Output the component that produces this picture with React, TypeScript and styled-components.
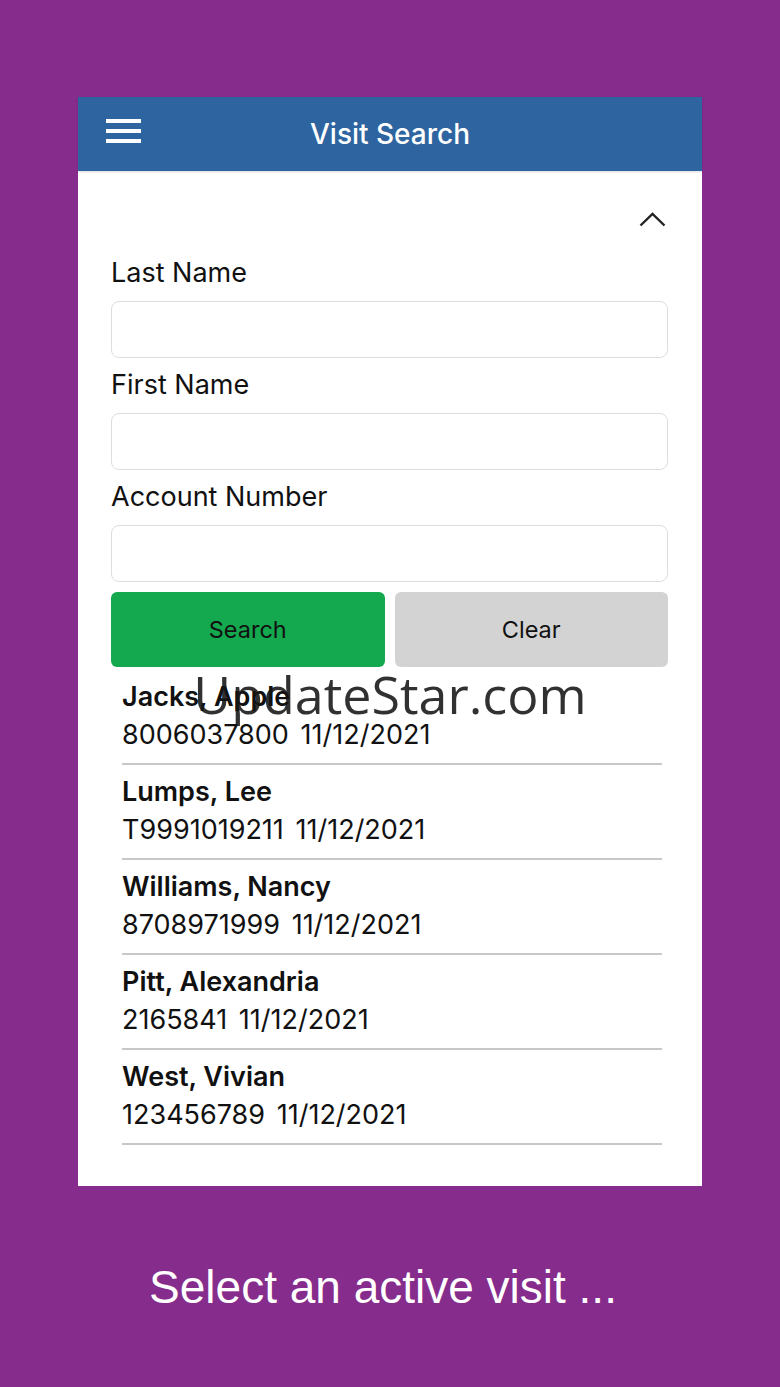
import React from "react";
import styled, { createGlobalStyle } from "styled-components";

const GlobalStyle = createGlobalStyle`
  html, body {
    margin: 0;
    padding: 0;
    background: #862c8c;
  }
  body {
    font-family: Inter, Roboto, "Liberation Sans", Arial, sans-serif;
  }
`;

const Screen = styled.div`
  width: 780px;
  height: 1387px;
  background: #862c8c;
  display: flex;
  flex-direction: column;
  align-items: center;
  padding-top: 97px;
  box-sizing: border-box;
  position: relative;
`;

const Phone = styled.div`
  width: 624px;
  height: 1089px;
  background: #fff;
  display: flex;
  flex-direction: column;
`;

const Header = styled.header`
  height: 74px;
  background: #2e65a0;
  display: flex;
  align-items: center;
  position: relative;
  padding-left: 28px;
  box-shadow: 0 1px 2px rgba(0, 0, 0, 0.15);
`;

const Hamburger = styled.div`
  width: 35px;
  display: flex;
  flex-direction: column;
  gap: 6px;
  margin-top: -6px;

  span {
    display: block;
    height: 4px;
    background: #fff;
  }
`;

const Title = styled.h1`
  position: absolute;
  left: 0;
  right: 0;
  margin: 0;
  text-align: center;
  color: #fff;
  font-size: 28px;
  font-weight: 500;
  pointer-events: none;
`;

const Form = styled.div`
  padding: 34px 34px 40px 33px;
  display: flex;
  flex-direction: column;
`;

const CollapseRow = styled.div`
  height: 28px;
  display: flex;
  justify-content: flex-end;
  align-items: center;
  padding-right: 2px;
  margin-bottom: 13px;
`;

const Label = styled.label`
  font-size: 27px;
  line-height: 30px;
  color: #111;
  margin: 12px 0 13px;
`;

const Input = styled.input`
  height: 57px;
  box-sizing: border-box;
  border: 1.5px solid #dedede;
  border-radius: 8px;
  background: #fff;
  outline: none;
`;

const Buttons = styled.div`
  display: grid;
  grid-template-columns: 1fr 1fr;
  gap: 10px;
  margin-top: 10px;
`;

const Button = styled.button<{ $variant: "go" | "clear" }>`
  height: 75px;
  border: none;
  border-radius: 6px;
  font-family: Inter, Roboto, "Liberation Sans", Arial, sans-serif;
  font-size: 23.5px;
  color: #111;
  background: ${(p) => (p.$variant === "go" ? "#14a84f" : "#d3d3d3")};
`;

const List = styled.ul`
  list-style: none;
  margin: 3px 6px 0 11px;
  padding: 0;
`;

const Item = styled.li`
  padding: 8px 0 9px;
  border-bottom: 2px solid #c8c8c8;
  font-size: 27px;
  line-height: 38px;
  color: #111;
`;

const Name = styled.div`
  font-weight: 600;
`;

const Account = styled.span`
  margin-right: 0.15em;
`;

const Caption = styled.div`
  color: #fff;
  font-family: "Liberation Sans", Arial, sans-serif;
  font-size: 46px;
  margin-top: 74px;
  padding-right: 14px;
`;

const Watermark = styled.div`
  position: absolute;
  top: 658px;
  left: 0;
  right: 0;
  text-align: center;
  font-family: "Open Sans", "Noto Sans", sans-serif;
  font-size: 52px;
  color: rgba(20, 20, 20, 0.88);
  pointer-events: none;
`;

const visits = [
  { name: "Jacks, Apple", account: "8006037800", date: "11/12/2021" },
  { name: "Lumps, Lee", account: "T9991019211", date: "11/12/2021" },
  { name: "Williams, Nancy", account: "8708971999", date: "11/12/2021" },
  { name: "Pitt, Alexandria", account: "2165841", date: "11/12/2021" },
  { name: "West, Vivian", account: "123456789", date: "11/12/2021" },
];

export default function App() {
  return (
    <>
      <GlobalStyle />
      <Screen>
        <Phone>
          <Header>
            <Hamburger>
              <span />
              <span />
              <span />
            </Hamburger>
            <Title>Visit Search</Title>
          </Header>
          <Form>
            <CollapseRow>
              <svg width="27" height="15" viewBox="0 0 27 15">
                <path d="M1.5 13.5 L13.5 2 L25.5 13.5" fill="none" stroke="#222" strokeWidth="2.4" />
              </svg>
            </CollapseRow>
            <Label>Last Name</Label>
            <Input />
            <Label>First Name</Label>
            <Input />
            <Label>Account Number</Label>
            <Input />
            <Buttons>
              <Button $variant="go">Search</Button>
              <Button $variant="clear">Clear</Button>
            </Buttons>
            <List>
              {visits.map((v) => (
                <Item key={v.name}>
                  <Name>{v.name}</Name>
                  <div>
                    <Account>{v.account}</Account> {v.date}
                  </div>
                </Item>
              ))}
            </List>
          </Form>
        </Phone>
        <Caption>Select an active visit ...</Caption>
        <Watermark>UpdateStar.com</Watermark>
      </Screen>
    </>
  );
}
